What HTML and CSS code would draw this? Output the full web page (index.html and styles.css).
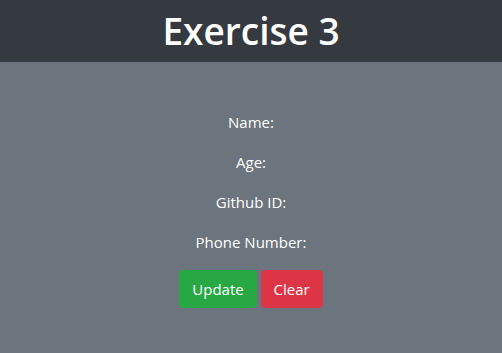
FILE: index.html
```html
<!DOCTYPE html>
<html>
<head>
    <title>Exercise 3</title>
    <meta charset="UTF-8">
    <meta name="viewport" content="width=device-width, initial-scale=1.0">
    <link rel="stylesheet" href="styles.css">
</head>
<body>
    <header class="top-bar">
        <h1>Exercise 3</h1>
    </header>

    <main class="content">
        <form id="profileForm">
            <p class="field">Name: <span id="nameValue"></span></p>
            <p class="field">Age: <span id="ageValue"></span></p>
            <p class="field">Github ID: <span id="githubValue"></span></p>
            <p class="field">Phone Number: <span id="phoneValue"></span></p>

            <button type="submit" class="btn btn-success">Update</button>
            <button type="reset" class="btn btn-danger">Clear</button>
        </form>
    </main>
</body>
</html>
```

FILE: styles.css
```css
html, body {
    height: 100%;
}
body {
    margin: 0;
    font-family: "Open Sans", "Noto Sans", Arial, sans-serif;
    font-size: 15px;
    line-height: 24px;
    color: #fff;
    background-color: #6c757d;
}
.top-bar {
    background-color: #343a40;
    padding: 7px 0;
    text-align: center;
}
.top-bar h1 {
    margin: 0;
    font-size: 37px;
    font-weight: 600;
    line-height: 48px;
}
.content {
    padding-top: 48px;
    text-align: center;
}
.field {
    margin: 0 0 16px;
}
.btn {
    font-family: inherit;
    font-size: 15px;
    line-height: 24px;
    color: #fff;
    padding: 6px 12px;
    border: 1px solid transparent;
    border-radius: 4px;
    cursor: pointer;
}
.btn-success {
    background-color: #28a745;
    border-color: #28a745;
}
.btn-danger {
    background-color: #dc3545;
    border-color: #dc3545;
}
```
